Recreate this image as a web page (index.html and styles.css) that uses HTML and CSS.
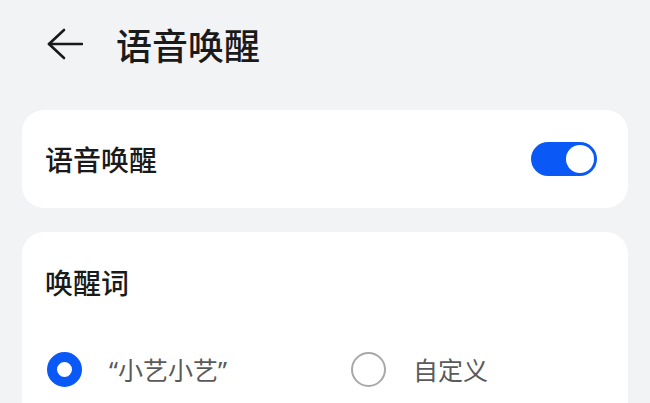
FILE: index.html
```html
<!DOCTYPE html>
<html lang="zh-CN">
<head>
<meta charset="utf-8">
<link rel="stylesheet" href="styles.css">
</head>
<body>
<header class="header">
  <svg class="back" width="36" height="32" viewBox="0 0 36 32" fill="none" stroke="#1a1a1a" stroke-width="2.6" stroke-linecap="round" stroke-linejoin="round">
    <path d="M17 2 L2 16 L17 30"/>
    <path d="M2 16 H35"/>
  </svg>
  <h1 class="title">语音唤醒</h1>
</header>
<section class="card card-switch">
  <span class="label">语音唤醒</span>
  <span class="toggle"><span class="knob"></span></span>
</section>
<section class="card card-words">
  <div class="label">唤醒词</div>
  <div class="options">
    <div class="option first">
      <span class="radio checked"></span>
      <span class="opt-text"><span class="q">“</span>小艺小艺<span class="q">”</span></span>
    </div>
    <div class="option">
      <span class="radio"></span>
      <span class="opt-text">自定义</span>
    </div>
  </div>
</section>
</body>
</html>
```
FILE: styles.css
```css
html, body {
  margin: 0;
  padding: 0;
  background: #f1f3f5;
  font-family: "Noto Sans CJK SC", "Noto Sans", sans-serif;
  color: #1a1a1a;
  overflow: hidden;
  height: 403px;
}
.header {
  height: 88px;
  display: flex;
  align-items: center;
  padding-left: 47px;
}
.back {
  display: block;
  flex: none;
}
.title {
  margin: 0 0 0 33px;
  font-size: 36px;
  line-height: 40px;
  font-weight: 500;
}
.card {
  background: #ffffff;
  margin: 0 22px;
  border-radius: 22px;
}
.card-switch {
  margin-top: 22px;
  height: 98px;
  display: flex;
  align-items: center;
  justify-content: space-between;
  padding: 0 31px 0 23px;
}
.label {
  font-size: 28px;
  line-height: 28px;
  font-weight: 500;
}
.toggle {
  width: 66px;
  height: 34px;
  border-radius: 17px;
  background: #0a59f7;
  display: flex;
  align-items: center;
  justify-content: flex-end;
  padding: 0 3px;
  box-sizing: border-box;
}
.knob {
  width: 28px;
  height: 28px;
  border-radius: 50%;
  background: #ffffff;
}
.card-words {
  margin-top: 24px;
  padding: 36px 23px 40px;
}
.options {
  display: flex;
  align-items: center;
  margin-top: 53px;
  height: 40px;
}
.option {
  display: flex;
  align-items: center;
}
.option.first {
  width: 304px;
  padding-left: 2px;
}
.radio {
  width: 35px;
  height: 35px;
  border-radius: 50%;
  box-sizing: border-box;
  border: 2px solid #a8a8a8;
  flex: none;
}
.radio.checked {
  border: 10px solid #0a59f7;
}
.opt-text {
  margin-left: 27px;
  font-size: 25px;
  line-height: 30px;
  color: #5a5a5a;
}
.q {
  font-family: "Noto Sans", "Liberation Sans", sans-serif;
}
```
